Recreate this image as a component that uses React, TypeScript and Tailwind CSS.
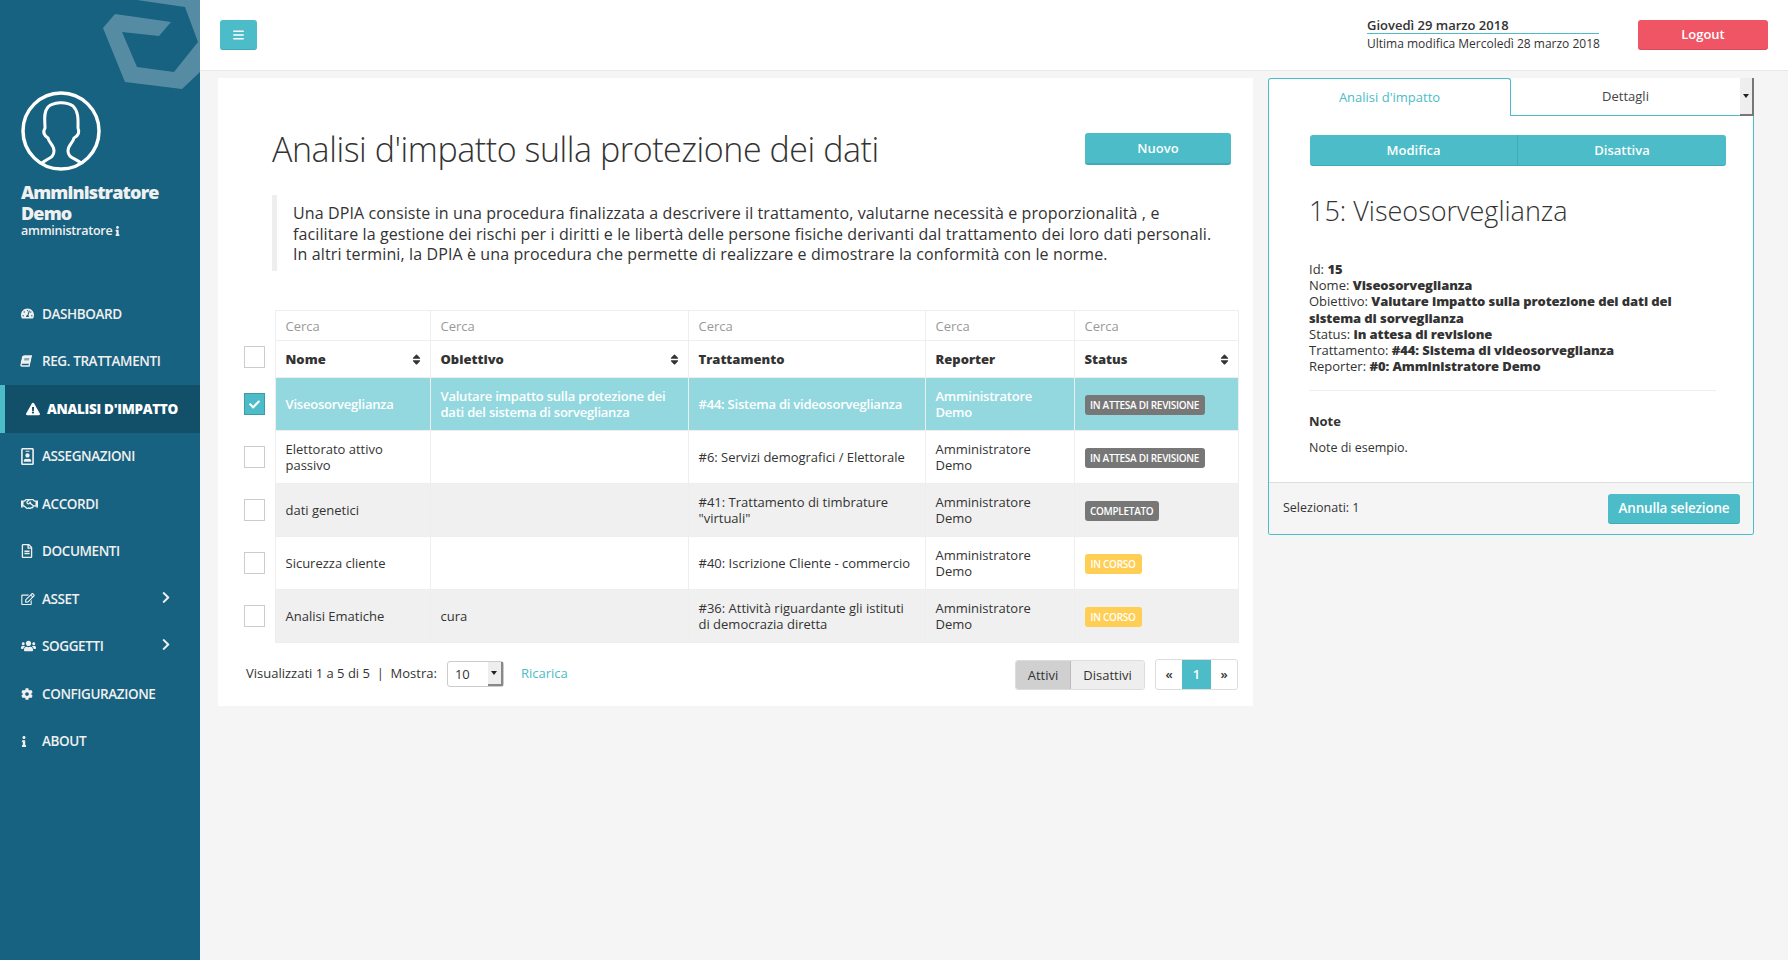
import {
  FaBars,
  FaBook,
  FaCheck,
  FaChevronRight,
  FaCog,
  FaExclamationTriangle,
  FaInfo,
  FaRegEdit,
  FaRegFileAlt,
  FaRegHandshake,
  FaRegIdBadge,
  FaSort,
  FaTachometerAlt,
  FaUsers,
} from "react-icons/fa";

const menu = [
  { label: "DASHBOARD", icon: FaTachometerAlt, size: "h-[13px] w-[13px]" },
  { label: "REG. TRATTAMENTI", icon: FaBook, size: "h-[12px] w-[10px] -skew-x-12" },
  { label: "ANALISI D'IMPATTO", icon: FaExclamationTriangle, size: "h-[14px] w-[14px]", active: true },
  { label: "ASSEGNAZIONI", icon: FaRegIdBadge, size: "h-[17px] w-[13px]" },
  { label: "ACCORDI", icon: FaRegHandshake, size: "h-[14px] w-[17px]" },
  { label: "DOCUMENTI", icon: FaRegFileAlt, size: "h-[14px] w-[12px]" },
  { label: "ASSET", icon: FaRegEdit, size: "h-[12px] w-[14px]", arrow: true },
  { label: "SOGGETTI", icon: FaUsers, size: "h-[14px] w-[15px]", arrow: true },
  { label: "CONFIGURAZIONE", icon: FaCog, size: "h-[12px] w-[12px]" },
  { label: "ABOUT", icon: FaInfo, size: "h-[11px] w-[6px]" },
];

const rows = [
  {
    nome: "Viseosorveglianza",
    obiettivo: "Valutare impatto sulla protezione dei dati del sistema di sorveglianza",
    trattamento: "#44: Sistema di videosorveglianza",
    status: "IN ATTESA DI REVISIONE",
    selected: true,
  },
  {
    nome: "Elettorato attivo passivo",
    obiettivo: "",
    trattamento: "#6: Servizi demografici / Elettorale",
    status: "IN ATTESA DI REVISIONE",
  },
  {
    nome: "dati genetici",
    obiettivo: "",
    trattamento: '#41: Trattamento di timbrature "virtuali"',
    status: "COMPLETATO",
  },
  {
    nome: "Sicurezza cliente",
    obiettivo: "",
    trattamento: "#40: Iscrizione Cliente - commercio",
    status: "IN CORSO",
  },
  {
    nome: "Analisi Ematiche",
    obiettivo: "cura",
    trattamento: "#36: Attività riguardante gli istituti di democrazia diretta",
    status: "IN CORSO",
  },
];

const columns = [
  { label: "Nome", sort: true, width: "w-[155px]" },
  { label: "Obiettivo", sort: true, width: "w-[258px]" },
  { label: "Trattamento", sort: false, width: "w-[237px]" },
  { label: "Reporter", sort: false, width: "w-[149px]" },
  { label: "Status", sort: true, width: "w-[164px]" },
];

const Sidebar = () => (
  <aside className="relative w-[200px] shrink-0 overflow-hidden bg-[#186281] text-[#f0f0f0]">
    <svg className="absolute left-0 top-0 h-[100px] w-[200px]" viewBox="0 0 200 100">
      <polygon
        points="103,28 115,14 171,22 159,36 122,32 137,67 174,72 198,42 185,7 137,0 200,0 200,72 182,89 125,82"
        fill="#ffffff"
        fillOpacity="0.27"
      />
    </svg>
    <div className="px-[21px] pt-[91px]">
      <svg className="h-[80px] w-[80px]" viewBox="0 0 80 80" fill="none" stroke="#ffffff">
        <circle cx="40" cy="40" r="38" strokeWidth="3.5" />
        <path
          d="M21 72C27 67 33 67 33 60C33 54 28 52 27 47C24 45 21 42 24 37C24 30 22 22 27 16C32 11 45 10 52 15C58 21 57 30 57 37C59 42 57 45 53 47C52 52 47 54 47 60C47 67 54 67 60 72"
          strokeWidth="3"
        />
      </svg>
      <div className="mt-[11px] text-[18px] font-extrabold leading-[21px] tracking-[-0.85px]">
        Amministratore Demo
      </div>
      <div className="-mt-[1px] flex items-center text-[12.5px] font-semibold leading-[16px] tracking-[-0.25px]">
        amministratore
        <FaInfo className="ml-[3px] h-[10px] w-[5px]" />
      </div>
    </div>
    <nav className="mt-[51px]">
      {menu.map((item) => {
        const Icon = item.icon;
        return (
          <div
            key={item.label}
            className={
              item.active
                ? "flex h-[47.5px] items-center border-l-[5px] border-[#4bbcc8] bg-[#124f69] pl-[21px] text-[13.5px] font-extrabold tracking-[-0.3px] text-white"
                : "flex h-[47.5px] items-center pl-[21px] text-[13.5px] font-semibold tracking-[-0.4px]"
            }
          >
            <span className="flex w-[22px] shrink-0 items-center">
              <Icon className={item.size} />
            </span>
            <span className="-ml-[1px] whitespace-nowrap">{item.label}</span>
            {item.arrow && <FaChevronRight className="absolute left-[161px] -mt-[3px] h-[13px] w-[10px]" />}
          </div>
        );
      })}
    </nav>
  </aside>
);

const Topbar = () => (
  <header className="flex h-[71px] shrink-0 items-center justify-between border-b border-[#e8e8e8] bg-white pl-[20px] pr-[20px]">
    <button className="flex h-[30px] w-[37px] items-center justify-center rounded-[3px] border-b border-[#41aab5] bg-[#4bbcc8] text-white">
      <FaBars className="h-[12px] w-[11px]" />
    </button>
    <div className="flex items-center gap-[39px]">
      <div className="-ml-[1px] w-[232px] text-[13px] leading-[16px] text-[#333]">
        <div className="border-b border-[#4bbcc8] font-semibold leading-[15px]">Giovedì 29 marzo 2018</div>
        <div className="mt-[2px] whitespace-nowrap text-[12px]">Ultima modifica Mercoledì 28 marzo 2018</div>
      </div>
      <button className="h-[30px] w-[130px] rounded-[3px] border-b border-[#dc4a59] bg-[#f05565] pt-[1px] text-[13px] font-semibold text-white">
        Logout
      </button>
    </div>
  </header>
);

const Badge = ({ text }: { text: string }) => (
  <span
    className={
      text === "IN CORSO"
        ? "mt-[1px] inline-block h-[20px] rounded-[3px] bg-[#ffce54] px-[6px] align-middle text-[10px] font-semibold leading-[20px] tracking-[-0.3px] text-white"
        : "mt-[1px] inline-block h-[20px] rounded-[3px] bg-[#777777] px-[5.5px] align-middle text-[10px] font-semibold leading-[20px] tracking-[-0.3px] text-white"
    }
  >
    {text}
  </span>
);

const Checkbox = ({ checked }: { checked?: boolean }) => (
  <span
    className={
      checked
        ? "flex h-[22px] w-[21px] items-center justify-center border border-[#3f9aa5] bg-[#4bbcc8] text-white"
        : "flex h-[22px] w-[21px] border border-[#cccccc] bg-white"
    }
  >
    {checked && <FaCheck className="h-[11px] w-[11px]" />}
  </span>
);

const DataTable = () => (
  <table className="w-[994px] table-fixed border-collapse text-[13px] leading-[16px] text-[#333]">
    <thead>
      <tr className="h-[30px]">
        <th className="w-[31px] p-0" />
        {columns.map((col) => (
          <th key={col.label} className={`${col.width} border border-[#eeeeee] pl-[10px] text-left font-normal text-[#999]`}>
            Cerca
          </th>
        ))}
      </tr>
      <tr className="h-[37px]">
        <th className="p-0 pb-[4px] align-middle">
          <Checkbox />
        </th>
        {columns.map((col) => (
          <th key={col.label} className="border border-[#eeeeee] pl-[10px] pr-[9px] text-left font-extrabold">
            <div className="flex items-center justify-between">
              {col.label}
              {col.sort && <FaSort className="h-[13px] w-[9px] text-[#333]" />}
            </div>
          </th>
        ))}
      </tr>
    </thead>
    <tbody>
      {rows.map((row, i) => {
        const bg = row.selected
          ? "bg-[#93d8df] text-white font-semibold tracking-[-0.22px]"
          : i % 2 === 0
            ? "bg-[#f0f0f0]"
            : "bg-white";
        const cell = `border border-[#eeeeee] px-[10px] py-0 ${bg}`;
        return (
          <tr key={row.nome} className="h-[53px]">
            <td className="p-0">
              <Checkbox checked={row.selected} />
            </td>
            <td className={cell}>{row.nome}</td>
            <td className={cell}>{row.obiettivo}</td>
            <td className={cell}>{row.trattamento}</td>
            <td className={cell}>
              Amministratore
              <br />
              Demo
            </td>
            <td className={cell}>
              <Badge text={row.status} />
            </td>
          </tr>
        );
      })}
    </tbody>
  </table>
);

const ListFooter = () => (
  <div className="mt-[16px] flex items-center justify-between pl-[2px] text-[13px] text-[#333]">
    <div className="flex items-center">
      <span className="-mt-[1px] whitespace-pre">Visualizzati 1 a 5 di 5  |  Mostra:</span>
      <div className="-mt-[2px] ml-[10px] flex h-[26px] w-[57px] items-stretch rounded-[3px] border border-[#cccccc] pl-[7px] leading-[24px]">
        <span className="flex-1">10</span>
        <span className="flex w-[15px] items-center justify-center border-b-2 border-r-2 border-[#888] bg-[#eeeeee]">
          <span className="h-0 w-0 border-x-[3px] border-t-[4px] border-x-transparent border-t-[#222]" />
        </span>
      </div>
      <span className="-mt-[1px] ml-[17px] text-[#4bbcc8]">Ricarica</span>
    </div>
    <div className="flex items-center gap-[10px]">
      <div className="flex h-[30px] overflow-hidden rounded-[3px] border border-[#dddddd] leading-[28px]">
        <span className="w-[55px] border-r border-[#bbbbbb] bg-[#d0d0d0] text-center">Attivi</span>
        <span className="w-[73px] bg-[#eeeeee] text-center">Disattivi</span>
      </div>
      <div className="flex h-[31px] items-stretch overflow-hidden rounded-[3px] border border-[#dddddd] leading-[29px]">
        <span className="w-[26px] text-center font-semibold">«</span>
        <span className="w-[29px] bg-[#4bbcc8] text-center font-semibold text-white">1</span>
        <span className="w-[26px] text-center font-semibold">»</span>
      </div>
    </div>
  </div>
);

const MainPanel = () => (
  <section className="h-[628px] w-[1035px] shrink-0 bg-white pl-[26px] pr-[15px]">
    <div className="flex items-start justify-between pl-[28px] pr-[7px] pt-[55px]">
      <h1 className="-mt-[2px] text-[34px] font-light leading-[36px] tracking-[-0.44px] text-[#333]">
        Analisi d'impatto sulla protezione dei dati
      </h1>
      <button className="h-[32px] w-[146px] rounded-[3px] border-b-2 border-[#41aab5] bg-[#4bbcc8] pt-[2px] text-[13px] font-semibold text-white">
        Nuovo
      </button>
    </div>
    <blockquote className="ml-[28px] mt-[28px] h-[76px] border-l-[5px] border-[#eeeeee] pl-[16px] pt-[8px] text-[16px] leading-[20.5px] tracking-[0.11px] text-[#333]">
      Una DPIA consiste in una procedura finalizzata a descrivere il trattamento, valutarne necessità e proporzionalità , e
      <br />
      facilitare la gestione dei rischi per i diritti e le libertà delle persone fisiche derivanti dal trattamento dei loro dati personali.
      <br />
      In altri termini, la DPIA è una procedura che permette di realizzare e dimostrare la conformità con le norme.
    </blockquote>
    <div className="mt-[39px]">
      <DataTable />
      <ListFooter />
    </div>
  </section>
);

const DetailPanel = () => (
  <aside className="ml-[15px] w-[486px] shrink-0">
    <div className="flex h-[38px]">
      <div className="w-[243px] rounded-t-[3px] border border-b-0 border-[#4bbcc8] bg-white pt-[8px] text-center text-[13px] leading-[20px] text-[#4bbcc8]">
        Analisi d'impatto
      </div>
      <div className="w-[229px] border-b border-[#4bbcc8] bg-white pt-[8px] text-center text-[13px] leading-[20px] text-[#444]">
        Dettagli
      </div>
      <div className="flex w-[14px] items-center justify-center border-b-2 border-r-2 border-[#777] bg-[#eeeeee]">
        <span className="h-0 w-0 border-x-[3px] border-t-[4px] border-x-transparent border-t-[#222]" />
      </div>
    </div>
    <div className="overflow-hidden rounded-b-[3px] border border-t-0 border-[#4bbcc8] bg-white">
      <div className="h-[366px] pl-[40px] pr-[28px] pt-[19px] text-[13px] leading-[16.2px] text-[#333]">
        <div className="-mr-[1px] ml-[1px] flex h-[31px] overflow-hidden rounded-[3px] border-b border-[#41aab5] bg-[#4bbcc8] text-[13px] font-semibold leading-[30px] text-white">
          <span className="w-[208px] border-r border-[#41aab5] text-center">Modifica</span>
          <span className="flex-1 text-center">Disattiva</span>
        </div>
        <h2 className="mt-[27px] text-[27px] font-light leading-[36px] text-[#333]">15: Viseosorveglianza</h2>
        <div className="mt-[32px] w-[407px] border-b border-[#eeeeee] pb-[16px]">
          Id: <b className="font-extrabold tracking-[-0.1px]">15</b>
          <br />
          Nome: <b className="font-extrabold tracking-[-0.1px]">Viseosorveglianza</b>
          <br />
          Obiettivo: <b className="font-extrabold tracking-[-0.1px]">Valutare impatto sulla protezione dei dati del sistema di sorveglianza</b>
          <br />
          Status: <b className="font-extrabold tracking-[-0.1px]">in attesa di revisione</b>
          <br />
          Trattamento: <b className="font-extrabold tracking-[-0.1px]">#44: Sistema di videosorveglianza</b>
          <br />
          Reporter: <b className="font-extrabold tracking-[-0.1px]">#0: Amministratore Demo</b>
        </div>
        <div className="mt-[22px] font-bold">Note</div>
        <div className="mt-[10px] text-[12.5px]">Note di esempio.</div>
      </div>
      <div className="flex h-[52px] items-center justify-between border-t border-[#dddddd] bg-[#f5f5f5] pl-[14px] pr-[13px] text-[12.5px] text-[#333]">
        <span>Selezionati: 1</span>
        <button className="h-[30px] w-[132px] rounded-[3px] border-b border-[#41aab5] bg-[#4bbcc8] text-[13.5px] font-semibold tracking-[-0.2px] text-white">
          Annulla selezione
        </button>
      </div>
    </div>
  </aside>
);

export default function App() {
  return (
    <div className="flex h-screen w-full overflow-hidden bg-[#f5f5f5] font-['Open_Sans',sans-serif]">
      <Sidebar />
      <div className="flex min-w-0 flex-1 flex-col">
        <Topbar />
        <main className="flex items-start pl-[18px] pt-[7px]">
          <MainPanel />
          <DetailPanel />
        </main>
      </div>
    </div>
  );
}
